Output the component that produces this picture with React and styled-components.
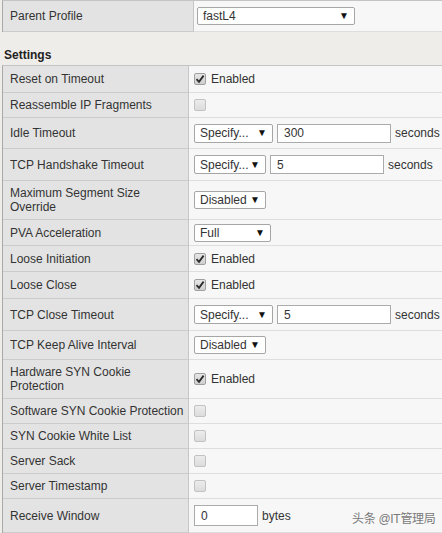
import React from 'react';
import styled, { createGlobalStyle } from 'styled-components';

const GlobalStyle = createGlobalStyle`
  html, body {
    margin: 0;
    padding: 0;
    background: #efede9;
  }
  body {
    font-family: "Liberation Sans", Arial, sans-serif;
    font-size: 12px;
    color: #333;
  }
`;

const settings = [
  { label: 'Reset on Timeout', h: 27, type: 'check', checked: true },
  { label: 'Reassemble IP Fragments', h: 25, type: 'check' },
  { label: 'Idle Timeout', h: 31, type: 'timeout', select: 'Specify...', sw: 79, value: '300', tall: true },
  { label: 'TCP Handshake Timeout', h: 32, type: 'timeout', select: 'Specify...', sw: 72, value: '5' },
  { label: ['Maximum Segment Size', 'Override'], h: 39, type: 'select', select: 'Disabled', sw: 72 },
  { label: 'PVA Acceleration', h: 26, type: 'select', select: 'Full', sw: 77 },
  { label: 'Loose Initiation', h: 26, type: 'check', checked: true },
  { label: 'Loose Close', h: 27, type: 'check', checked: true },
  { label: 'TCP Close Timeout', h: 32, type: 'timeout', select: 'Specify...', sw: 79, value: '5' },
  { label: 'TCP Keep Alive Interval', h: 29, type: 'select', select: 'Disabled', sw: 72 },
  { label: ['Hardware SYN Cookie', 'Protection'], h: 39, type: 'check', checked: true },
  { label: 'Software SYN Cookie Protection', h: 25, type: 'check' },
  { label: 'SYN Cookie White List', h: 25, type: 'check' },
  { label: 'Server Sack', h: 25, type: 'check' },
  { label: 'Server Timestamp', h: 25, type: 'check' },
  { label: 'Receive Window', h: 34, type: 'bytes', value: '0' },
];

const Check = ({ checked }) => (
  <Box $checked={checked}>
    {checked && (
      <svg width="10" height="10" viewBox="0 0 10 10">
        <path d="M1.5 5.2 L4 7.8 L8.6 1.6" fill="none" stroke="#2b2b2b" strokeWidth="1.8" />
      </svg>
    )}
  </Box>
);

const Select = ({ text, width, tall }) => (
  <SelectBox style={{ width }} $tall={tall}>
    <span>{text}</span>
    <Arrow>▼</Arrow>
  </SelectBox>
);

const renderValue = (s) => {
  if (s.type === 'check') {
    return (
      <>
        <Check checked={s.checked} />
        {s.checked && <CheckText>Enabled</CheckText>}
      </>
    );
  }
  if (s.type === 'select') return <Select text={s.select} width={s.sw} />;
  if (s.type === 'timeout') {
    return (
      <>
        <Select text={s.select} width={s.sw} tall />
        <TextInput $w={114}>{s.value}</TextInput>
        <Unit>seconds</Unit>
      </>
    );
  }
  return (
    <>
      <TextInput $w={64} $h={21}>{s.value}</TextInput>
      <Unit>bytes</Unit>
    </>
  );
};

const App = () => {
  return (
    <>
      <GlobalStyle />
      <Page>
        <Table>
          <Row $h={31} $label={191}>
            <Label>Parent Profile</Label>
            <Value $pad={3}>
              <Select text="fastL4" width={158} />
            </Value>
          </Row>
        </Table>
        <Heading>Settings</Heading>
        <Table>
          {settings.map((s, i) => (
            <Row key={i} $h={s.h} $label={186}>
              <Label>
                {Array.isArray(s.label) ? (
                  <>
                    {s.label[0]}
                    <br />
                    {s.label[1]}
                  </>
                ) : (
                  s.label
                )}
              </Label>
              <Value $pad={5}>{renderValue(s)}</Value>
            </Row>
          ))}
        </Table>
        <Watermark>头条 @IT管理局</Watermark>
      </Page>
    </>
  );
};

export default App;

const Page = styled.div`
  position: relative;
  padding-left: 2px;
  width: 440px;
  height: 533px;
  overflow: hidden;
`;

const Table = styled.div`
  border-top: 1px solid #c4c4c4;
  border-left: 1px solid #a9a9a9;
`;

const Row = styled.div`
  display: grid;
  grid-template-columns: ${(p) => p.$label}px 1fr;
  height: ${(p) => p.$h}px;
`;

const Label = styled.div`
  box-sizing: border-box;
  display: flex;
  align-items: center;
  padding-left: 7px;
  background: #e3e3e3;
  border-right: 1px solid #c6c6c6;
  border-bottom: 1px solid #cbcbcb;
  line-height: 14px;
  color: #333;
`;

const Value = styled.div`
  box-sizing: border-box;
  display: flex;
  align-items: center;
  padding-left: ${(p) => p.$pad}px;
  background: #f7f7f7;
  border-bottom: 1px solid #dedede;
  white-space: nowrap;
`;

const Heading = styled.div`
  box-sizing: border-box;
  height: 33px;
  display: flex;
  align-items: flex-end;
  padding: 0 0 3px 2px;
  font-weight: bold;
  line-height: 14px;
  color: #222;
`;

const SelectBox = styled.div`
  box-sizing: border-box;
  display: flex;
  align-items: center;
  justify-content: space-between;
  height: ${(p) => (p.$tall ? 19 : 18)}px;
  padding: 0 5px 0 5px;
  background: #fff;
  border: 1px solid #a6a6a6;
  border-radius: 2px;
  color: #333;
`;

const Arrow = styled.span`
  font-size: 10px;
  line-height: 10px;
  color: #111;
`;

const TextInput = styled.div`
  box-sizing: border-box;
  display: flex;
  align-items: center;
  width: ${(p) => p.$w}px;
  height: ${(p) => p.$h || 19}px;
  margin-left: 4px;
  padding-left: 6px;
  background: #fff;
  border: 1px solid #ababab;
  color: #333;

  &:first-child {
    margin-left: 0;
  }
`;

const Unit = styled.span`
  margin-left: 4px;
  color: #333;
`;

const Box = styled.span`
  box-sizing: border-box;
  display: inline-flex;
  align-items: center;
  justify-content: center;
  width: 12px;
  height: 12px;
  border: 1px solid ${(p) => (p.$checked ? '#a0a0a0' : '#c2c2c2')};
  border-radius: 2px;
  background: ${(p) =>
    p.$checked
      ? 'linear-gradient(#e6e6e6, #cfcfcf)'
      : 'linear-gradient(#ececec, #dcdcdc)'};
`;

const CheckText = styled.span`
  margin-left: 5px;
  color: #333;
`;

const Watermark = styled.div`
  position: absolute;
  left: 352px;
  top: 509px;
  font-family: "Liberation Sans", "Noto Sans CJK SC", sans-serif;
  font-size: 12px;
  color: #7a7a7a;
  letter-spacing: -0.3px;
`;
